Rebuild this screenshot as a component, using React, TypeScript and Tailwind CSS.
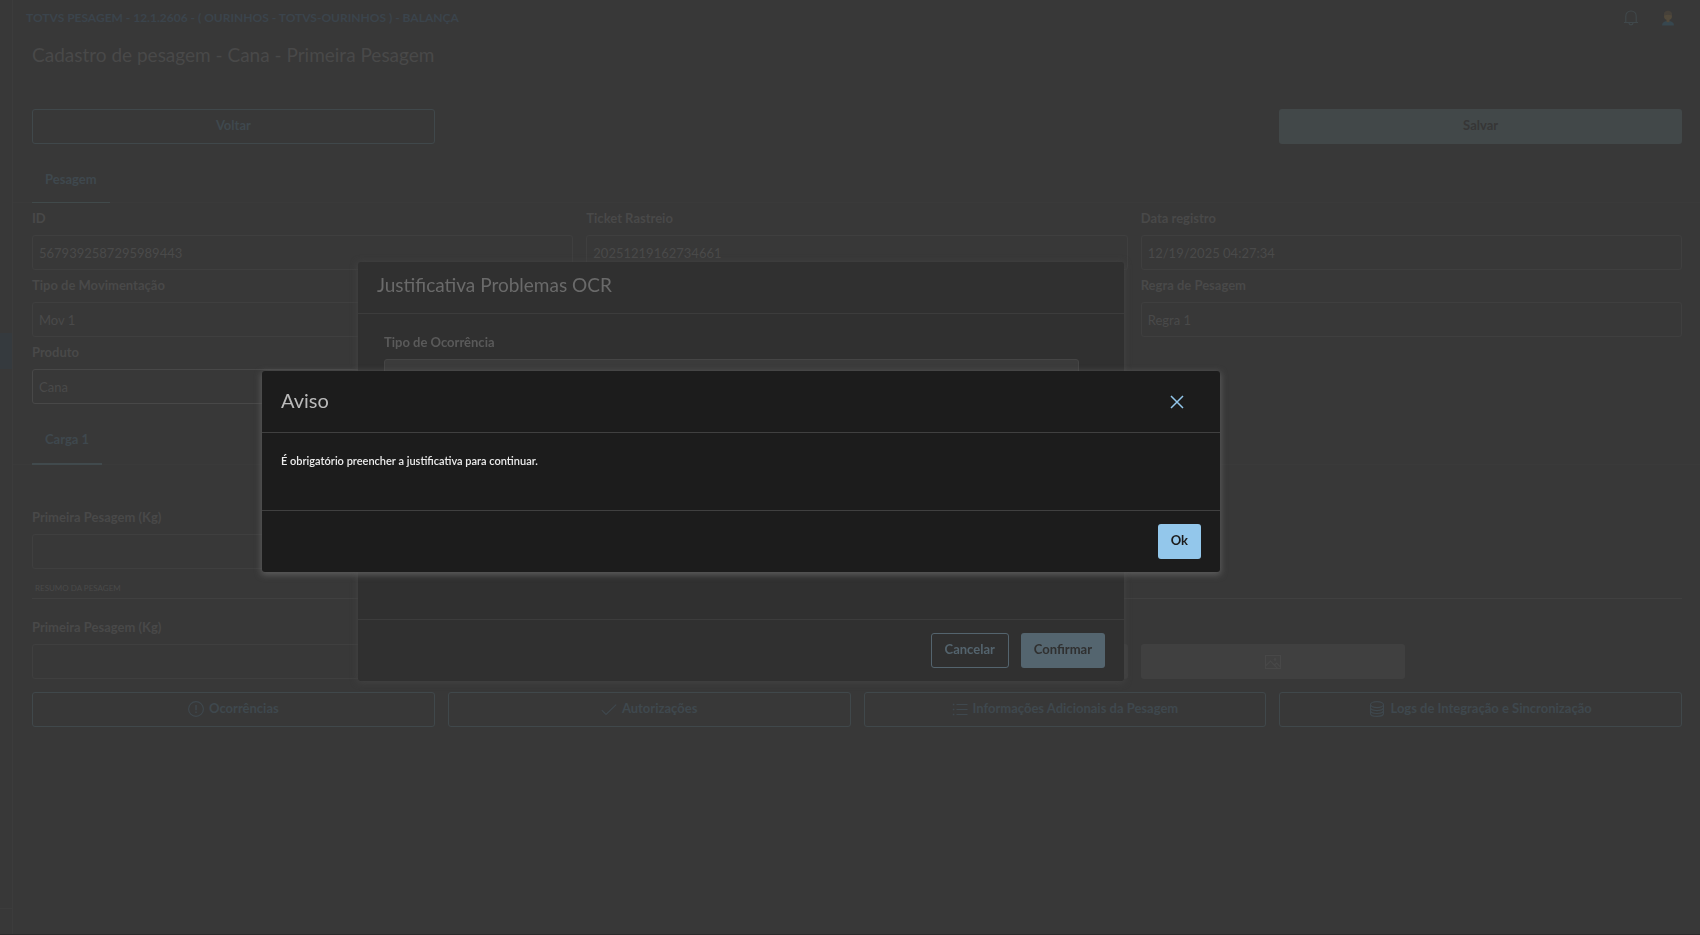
import React, { useId } from 'react';

interface FieldProps {
    label: string;
    value?: string;
    active?: boolean;
    className?: string;
}

const Field: React.FC<FieldProps> = ({ label, value = '', active = false, className = '' }) => {
    const id = useId();

    return (
        <div className={className}>
            <label htmlFor={id} className="flex h-8 items-center text-[13px] font-bold text-[#494949]">
                {label}
            </label>
            <input
                id={id}
                type="text"
                defaultValue={value}
                readOnly={!active}
                className={`block h-[35px] w-full rounded-[3px] border bg-transparent px-[6px] text-[13px] text-[#4a4a4a] outline-none ${
                    active ? 'border-[#484848]' : 'border-[#3f3f3f]'
                }`}
            />
        </div>
    );
};

const Tab: React.FC<{ label: string; lineClass: string }> = ({ label, lineClass }) => (
    <div role="tablist" className="border-b border-[#3a3a3a] px-[19px]">
        <button
            type="button"
            role="tab"
            aria-selected="true"
            className={`-mb-px flex items-center px-[13px] text-[13px] font-bold text-[#3f484e] ${lineClass}`}
        >
            {label}
        </button>
    </div>
);

const outlineButton =
    'flex h-[35px] w-full items-center justify-center gap-[5px] rounded-[3px] border border-[#40484b] pb-px text-[13px] font-bold text-[#3f484e]';

const iconProps = {
    width: 16,
    height: 16,
    viewBox: '0 0 16 16',
    fill: 'none',
    stroke: 'currentColor',
    strokeWidth: 1.1,
};

const AlertIcon = () => (
    <svg {...iconProps}>
        <circle cx="8" cy="8" r="7.4" />
        <path d="M8 4v5.2" strokeWidth="1.4" />
        <path d="M8 10.6V12" strokeWidth="1.4" />
    </svg>
);

const CheckIcon = () => (
    <svg {...iconProps}>
        <path d="M.8 9.2 5 13.4 15.2 3.6" />
    </svg>
);

const ListIcon = () => (
    <svg {...iconProps}>
        <path d="M4.5 3.5H15.5M4.5 8.5H15.5M4.5 13.5H15.5" />
        <path d="M.8 3.5h1.6M.8 8.5h1.6M.8 13.5h1.6" strokeWidth="1.6" />
    </svg>
);

const DatabaseIcon = () => (
    <svg {...iconProps}>
        <ellipse cx="8" cy="3.6" rx="6.5" ry="3" />
        <path d="M1.5 3.6v8.8c0 1.700 2.900 3 6.500 3s6.500-1.300 6.500-3V3.600" />
        <path d="M1.5 6.6c0 1.700 2.900 3 6.500 3s6.500-1.300 6.500-3" />
        <path d="M1.5 9.500c0 1.700 2.900 3 6.500 3s6.500-1.300 6.500-3" />
    </svg>
);

const ImageIcon = () => (
    <svg {...iconProps}>
        <rect x=".5" y="1.5" width="15" height="13" />
        <path d="M.5 12 5.5 7l7 7.5M9.5 11l2-2 4 4" />
        <circle cx="10" cy="5.5" r=".8" />
    </svg>
);

const BellIcon = () => (
    <svg {...iconProps}>
        <path d="M1 12.5h14M2.8 12.5V6.2C2.8 3.2 5 1 8 1s5.2 2.2 5.2 5.2v6.3" />
        <path d="M6 12.8c0 1.2.8 2 2 2s2-.8 2-2" />
    </svg>
);

const UserIcon = () => (
    <svg width="14" height="16" viewBox="0 0 14 16">
        <path d="M1 15.5c0-3 2-4.5 6-4.5s6 1.5 6 4.5z" fill="#37474f" />
        <circle cx="7" cy="6" r="4" fill="#51493b" />
        <path d="M3 5.5C2.6 2.4 4.4.8 7 .8s4.4 1.6 4 4.7C9 4.6 6 4.5 3 5.5z" fill="#46413a" />
        <path d="M5.5 9h3v2.5L7 12.5l-1.5-1z" fill="#51493b" />
    </svg>
);

const actions = [
    { label: 'Ocorrências', icon: <AlertIcon /> },
    { label: 'Autorizações', icon: <CheckIcon /> },
    { label: 'Informações Adicionais da Pesagem', icon: <ListIcon /> },
    { label: 'Logs de Integração e Sincronização', icon: <DatabaseIcon /> },
];

const JustificationModal = () => (
    <section
        role="dialog"
        aria-label="Justificativa Problemas OCR"
        className="flex h-[419px] w-full max-w-[766px] flex-col rounded-[3px] bg-[#303030] shadow-[0_1px_6px_1px_#424242]"
    >
        <h2 className="flex h-[52px] shrink-0 items-center border-b border-[#3c3c3c] px-[19px] pb-1 text-[19px] text-[#6a6a6a]">
            Justificativa Problemas OCR
        </h2>
        <div className="flex-1 pt-[13px] pr-[45px] pl-[26px]">
            <label htmlFor="tipo" className="flex h-8 items-center text-[13px] font-bold text-[#5a5a5a]">
                Tipo de Ocorrência
            </label>
            <select
                id="tipo"
                className="block h-[35px] w-full appearance-none rounded-[3px] border border-[#454545] bg-[#3b3b3b]"
            />
        </div>
        <div className="flex justify-end gap-3 border-t border-[#3c3c3c] px-[19px] py-[13px]">
            <button
                type="button"
                className="h-[35px] rounded-[3px] border border-[#54646e] px-[13px] pb-px text-[13px] font-bold text-[#54646e]"
            >
                Cancelar
            </button>
            <button
                type="button"
                className="h-[35px] rounded-[3px] bg-[#54656f] px-[13px] pb-px text-[13px] font-bold text-[#303030]"
            >
                Confirmar
            </button>
        </div>
    </section>
);

const WarningModal = () => (
    <section
        role="alertdialog"
        aria-label="Aviso"
        className="w-full max-w-[958px] rounded-[3px] bg-[#1c1c1c] shadow-[0_2px_6px_1px_#5c5c5c]"
    >
        <header className="flex h-[62px] items-center justify-between border-b border-[#404040] pr-[36px] pl-[19px]">
            <h2 className="pb-1 text-xl text-[#bababa]">Aviso</h2>
            <button type="button" aria-label="Fechar" className="text-[#93c7eb]">
                <svg width="14" height="14" viewBox="0 0 14 14" fill="none" stroke="currentColor" strokeWidth="1.5">
                    <path d="M1 1l12 12M13 1L1 13" />
                </svg>
            </button>
        </header>
        <p className="h-[77px] px-[19px] pt-5 text-[11px] leading-4 font-semibold text-[#ececec]">
            É obrigatório preencher a justificativa para continuar.
        </p>
        <footer className="flex justify-end border-t border-[#404040] px-[19px] py-[13px]">
            <button
                type="button"
                className="h-[35px] rounded-[3px] bg-[#93c7eb] px-[13px] pb-px text-[13px] font-bold text-[#1c1c1c]"
            >
                Ok
            </button>
        </footer>
    </section>
);

export default function App() {
    return (
        <div className="flex min-h-screen border-b border-[#2b2b2b] bg-[#383838] font-[Lato,'Open_Sans',sans-serif]">
            <aside className="flex w-[13px] shrink-0 flex-col border-r border-[#3c3c3c]">
                <div className="mt-[333px] h-9 bg-[#353a3e]" />
                <div className="mt-auto h-[26px] border-t border-[#3c3c3c]" />
            </aside>

            <main className="min-w-0 flex-1 pr-[18px]">
                <header className="flex h-9 items-center justify-between pr-[7px] pl-[13px]">
                    <strong className="text-xs font-bold text-[#3b444c]">
                        TOTVS PESAGEM - 12.1.2606 - ( OURINHOS - TOTVS-OURINHOS ) - BALANÇA
                    </strong>
                    <div className="flex items-center gap-[22px] text-[#40484b]">
                        <BellIcon />
                        <UserIcon />
                    </div>
                </header>
                <h1 className="flex h-[41px] items-center pb-0.5 pl-[19px] text-[19px] text-[#494949]">
                    Cadastro de pesagem - Cana - Primeira Pesagem
                </h1>

                <div className="mt-8 grid grid-cols-4 gap-[13px] pl-[19px]">
                    <button type="button" className={outlineButton}>
                        Voltar
                    </button>
                    <button
                        type="button"
                        className="col-start-4 h-[35px] rounded-[3px] bg-[#424849] pb-px text-[13px] font-bold text-[#363636]"
                    >
                        Salvar
                    </button>
                </div>

                <div className="mt-[13px] -mr-[18px]">
                    <Tab label="Pesagem" lineClass="h-[46px] border-b border-[#414a4b]" />
                </div>

                <div className="grid grid-cols-3 gap-x-[13px] pl-[19px]">
                    <Field label="ID" value="5679392587295989443" />
                    <Field label="Ticket Rastreio" value="20251219162734661" />
                    <Field label="Data registro" value="12/19/2025 04:27:34" />
                    <Field label="Tipo de Movimentação" value="Mov 1" />
                    <Field label="Regra de Pesagem" value="Regra 1" className="col-start-3" />
                    <Field label="Produto" value="Cana" active className="col-start-1" />
                </div>

                <div className="mt-[13px] -mr-[18px]">
                    <Tab label="Carga 1" lineClass="h-12 border-b-2 border-[#414a4d]" />
                </div>

                <div className="mt-[37px] grid grid-cols-3 gap-x-[13px] pl-[19px]">
                    <Field label="Primeira Pesagem (Kg)" />
                </div>

                <h3 className="mt-2 ml-[19px] flex h-[22px] items-center border-b border-[#404040] px-[3px] text-[8px] text-[#4a4a4a]">
                    RESUMO DA PESAGEM
                </h3>

                <div className="mt-[13px] grid grid-cols-6 items-end gap-x-[13px] pl-[19px]">
                    <Field label="Primeira Pesagem (Kg)" className="col-span-2" />
                    <button
                        type="button"
                        aria-label="Pesar"
                        className="col-start-4 h-[35px] rounded-[3px] bg-[#404040]"
                    />
                    <button
                        type="button"
                        aria-label="Imagem"
                        className="flex h-[35px] items-center justify-center rounded-[3px] bg-[#404040] text-[#484848]"
                    >
                        <ImageIcon />
                    </button>
                </div>

                <div className="mt-[13px] grid grid-cols-4 gap-[13px] pl-[19px]">
                    {actions.map((action) => (
                        <button key={action.label} type="button" className={outlineButton}>
                            {action.icon}
                            {action.label}
                        </button>
                    ))}
                </div>
            </main>

            {/* Stacked dialogs, centered over the content area */}
            <div className="fixed inset-0 flex items-center justify-center pt-2 pr-[218px]">
                <JustificationModal />
            </div>
            <div className="fixed inset-0 flex items-center justify-center pt-2 pr-[218px]">
                <WarningModal />
            </div>
        </div>
    );
}
